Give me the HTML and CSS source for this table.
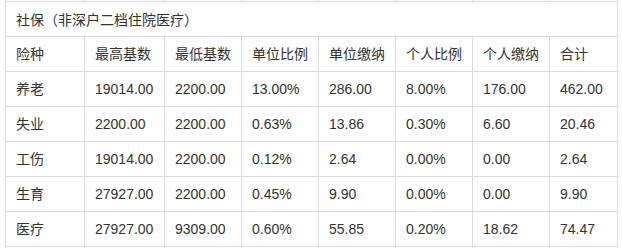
FILE: index.html
```html
<!DOCTYPE html>
<html lang="zh-CN">
<head>
    <meta charset="UTF-8">
    <meta name="viewport" content="width=device-width, initial-scale=1.0">
    <title>社保缴费明细</title>
    <link rel="stylesheet" href="styles.css">
</head>
<body>
    <table class="fee-table">
        <colgroup>
            <col class="col-name">
            <col class="col-wide">
            <col class="col-mid">
            <col class="col-mid">
            <col class="col-mid">
            <col class="col-mid">
            <col class="col-mid">
            <col class="col-last">
        </colgroup>
        <tr class="prev-row">
            <td></td><td></td><td></td><td></td><td></td><td></td><td></td><td></td>
        </tr>
        <tr>
            <td colspan="8" class="caption-cell">社保（非深户二档住院医疗）</td>
        </tr>
        <tr>
            <td>险种</td>
            <td>最高基数</td>
            <td>最低基数</td>
            <td>单位比例</td>
            <td>单位缴纳</td>
            <td>个人比例</td>
            <td>个人缴纳</td>
            <td>合计</td>
        </tr>
        <tr>
            <td>养老</td><td>19014.00</td><td>2200.00</td><td>13.00%</td><td>286.00</td><td>8.00%</td><td>176.00</td><td>462.00</td>
        </tr>
        <tr>
            <td>失业</td><td>2200.00</td><td>2200.00</td><td>0.63%</td><td>13.86</td><td>0.30%</td><td>6.60</td><td>20.46</td>
        </tr>
        <tr>
            <td>工伤</td><td>19014.00</td><td>2200.00</td><td>0.12%</td><td>2.64</td><td>0.00%</td><td>0.00</td><td>2.64</td>
        </tr>
        <tr>
            <td>生育</td><td>27927.00</td><td>2200.00</td><td>0.45%</td><td>9.90</td><td>0.00%</td><td>0.00</td><td>9.90</td>
        </tr>
        <tr>
            <td>医疗</td><td>27927.00</td><td>9309.00</td><td>0.60%</td><td>55.85</td><td>0.20%</td><td>18.62</td><td>74.47</td>
        </tr>
        <tr class="next-row">
            <td></td><td></td><td></td><td></td><td></td><td></td><td></td><td></td>
        </tr>
    </table>
</body>
</html>
```

FILE: styles.css
```css
body {
    margin: 0;
    padding: 0 0 0 5px;
    background-color: #fff;
    font-family: "Liberation Sans", "Noto Sans CJK SC", sans-serif;
    font-size: 14px;
    color: #333;
}
.fee-table {
    border-collapse: collapse;
    table-layout: fixed;
    width: 613px;
}
.col-name {
    width: 79px;
}
.col-wide {
    width: 80px;
}
.col-mid {
    width: 77px;
}
.col-last {
    width: 68px;
}
.fee-table td {
    border: 1px solid #ddd;
    padding: 8px 10px;
    line-height: 18px;
    height: 18px;
    white-space: nowrap;
    text-align: left;
}
.fee-table .prev-row td {
    border-top: none;
    padding: 0;
    height: 1px;
    line-height: 1px;
}
.fee-table .next-row td {
    border-bottom: none;
    padding: 0;
    height: 4px;
}
.fee-table .caption-cell {
    padding-top: 9px;
    padding-bottom: 7px;
}
```
